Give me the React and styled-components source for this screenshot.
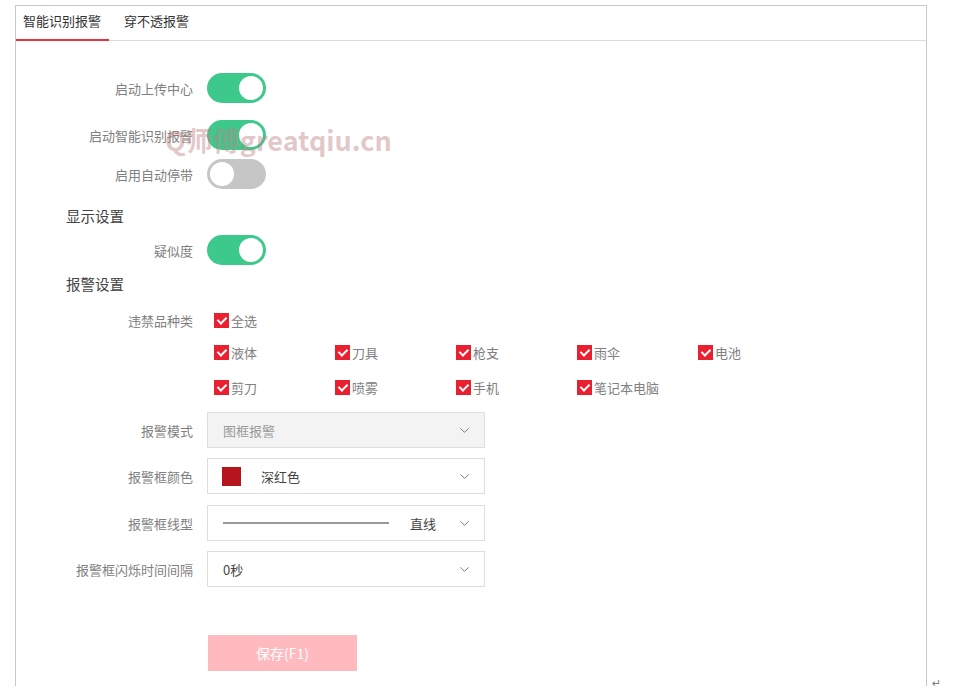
import React, {useState} from "react";
import styled, {createGlobalStyle} from "styled-components";
import {ChevronDown} from "lucide-react";

const GlobalStyle = createGlobalStyle`
  body {
    margin: 0;
    background: #fff;
    font-family: "Noto Sans CJK SC", "Noto Sans", sans-serif;
  }
`;

const items = [
  ["液体", "刀具", "枪支", "雨伞", "电池"],
  ["剪刀", "喷雾", "手机", "笔记本电脑"],
];

const App = () => {
  const [toggles, setToggles] = useState({
    upload: true,
    smart: true,
    autoStop: false,
    similarity: true,
  });

  const flip = (key) => setToggles({...toggles, [key]: !toggles[key]});

  return (
    <>
      <GlobalStyle />
      <Page>
        <Frame>
          <TabBar>
            <Tab active>智能识别报警</Tab>
            <Tab>穿不透报警</Tab>
          </TabBar>
          <Content>
            <Row mt={32} h={30}>
              <Label>启动上传中心</Label>
              <Switch on={toggles.upload} onClick={() => flip("upload")} />
            </Row>
            <Row mt={17} h={30}>
              <Label>启动智能识别报警</Label>
              <Switch on={toggles.smart} onClick={() => flip("smart")} />
            </Row>
            <Row mt={9} h={30}>
              <Label>启用自动停带</Label>
              <Switch on={toggles.autoStop} onClick={() => flip("autoStop")} />
            </Row>
            <Heading mt={17}>显示设置</Heading>
            <Row mt={9} h={30}>
              <Label>疑似度</Label>
              <Switch
                on={toggles.similarity}
                onClick={() => flip("similarity")}
              />
            </Row>
            <Heading mt={9}>报警设置</Heading>
            <Row mt={16} h={20}>
              <Label>违禁品种类</Label>
              <CheckGroup>
                <Check>
                  <Box />
                  全选
                </Check>
              </CheckGroup>
            </Row>
            {items.map((row, i) => (
              <Row mt={i === 0 ? 12 : 15} h={20} key={i}>
                <span />
                <CheckGroup>
                  {row.map((name) => (
                    <Check key={name}>
                      <Box />
                      {name}
                    </Check>
                  ))}
                </CheckGroup>
              </Row>
            ))}
            <Row mt={15} h={36}>
              <Label>报警模式</Label>
              <Select disabled>
                <SelectText disabled>图框报警</SelectText>
                <ChevronDown size={15} strokeWidth={1.6} color="#7a7a7a" />
              </Select>
            </Row>
            <Row mt={10} h={36}>
              <Label>报警框颜色</Label>
              <Select>
                <Swatch />
                <SelectText>深红色</SelectText>
                <ChevronDown size={15} strokeWidth={1.6} color="#7a7a7a" />
              </Select>
            </Row>
            <Row mt={11} h={36}>
              <Label>报警框线型</Label>
              <Select>
                <LineSample />
                <LineText>直线</LineText>
                <ChevronDown size={15} strokeWidth={1.6} color="#7a7a7a" />
              </Select>
            </Row>
            <Row mt={10} h={36}>
              <Label>报警框闪烁时间间隔</Label>
              <Select>
                <SelectText>0秒</SelectText>
                <ChevronDown size={15} strokeWidth={1.6} color="#7a7a7a" />
              </Select>
            </Row>
            <Row mt={48} h={36}>
              <span />
              <SaveButton>保存(F1)</SaveButton>
            </Row>
          </Content>
          <Watermark>Q师傅greatqiu.cn</Watermark>
        </Frame>
        <ReturnMark>↵</ReturnMark>
      </Page>
    </>
  );
};

const Page = styled.div`
  display: flex;
  align-items: flex-end;
  padding: 5px 0 0 15px;
  height: 686px;
  box-sizing: border-box;
`;

const Frame = styled.div`
  position: relative;
  width: 912px;
  height: 681px;
  box-sizing: border-box;
  border: 1px solid #c8c8c8;
  border-bottom: none;
  overflow: hidden;
`;

const ReturnMark = styled.span`
  margin-left: 5px;
  margin-bottom: -4px;
  font-size: 11px;
  color: #777;
  font-family: "DejaVu Sans", sans-serif;
`;

const TabBar = styled.div`
  display: flex;
  height: 34px;
  border-bottom: 1px solid #dcdcdc;
`;

const Tab = styled.div`
  display: flex;
  align-items: center;
  padding: 0 8px 4px 7px;
  margin-right: 8px;
  font-size: 13px;
  color: #333;
  border-bottom: 2px solid ${(p) => (p.active ? "#e8333a" : "transparent")};
  margin-bottom: -1px;
  cursor: pointer;
`;

const Content = styled.div`
  display: flex;
  flex-direction: column;
`;

const Row = styled.div`
  display: grid;
  grid-template-columns: 177px auto;
  column-gap: 14px;
  align-items: center;
  height: ${(p) => p.h}px;
  margin-top: ${(p) => p.mt}px;
`;

const Label = styled.div`
  text-align: right;
  font-size: 13px;
  color: #808080;
  white-space: nowrap;
`;

const Heading = styled.div`
  height: 20px;
  line-height: 20px;
  margin-top: ${(p) => p.mt}px;
  padding-left: 50px;
  font-size: 14.5px;
  color: #444;
`;

const Switch = styled.div`
  position: relative;
  width: 59px;
  height: 30px;
  border-radius: 15px;
  background: ${(p) => (p.on ? "#3dc98b" : "#c6c6c6")};
  cursor: pointer;

  &::after {
    content: "";
    position: absolute;
    top: 3px;
    left: ${(p) => (p.on ? "32px" : "3px")};
    width: 24px;
    height: 24px;
    border-radius: 50%;
    background: #fff;
  }
`;

const CheckGroup = styled.div`
  display: grid;
  grid-template-columns: repeat(5, 121px);
  padding-left: 7px;
`;

const Check = styled.label`
  display: flex;
  align-items: center;
  gap: 2px;
  font-size: 13px;
  color: #808080;
  white-space: nowrap;
`;

const Box = styled.span`
  position: relative;
  width: 15px;
  height: 15px;
  background: #e8202f;
  flex-shrink: 0;

  &::after {
    content: "";
    position: absolute;
    left: 5px;
    top: 2.5px;
    width: 4px;
    height: 7px;
    border: solid #fff;
    border-width: 0 2px 2px 0;
    transform: rotate(45deg);
  }
`;

const Select = styled.div`
  display: flex;
  align-items: center;
  width: 278px;
  height: 36px;
  box-sizing: border-box;
  padding: 0 12px 0 15px;
  border: 1px solid #dedede;
  background: ${(p) => (p.disabled ? "#f3f3f3" : "#fff")};
`;

const SelectText = styled.span`
  flex: 1;
  font-size: 13px;
  color: ${(p) => (p.disabled ? "#9a9a9a" : "#444")};
`;

const Swatch = styled.span`
  width: 19px;
  height: 19px;
  margin-left: -1px;
  margin-right: 20px;
  background: #b5161e;
`;

const LineSample = styled.span`
  width: 166px;
  height: 2px;
  background: #999;
  margin-right: 21px;
`;

const LineText = styled.span`
  flex: 1;
  font-size: 13px;
  color: #444;
`;

const SaveButton = styled.button`
  width: 149px;
  height: 36px;
  margin-left: 1px;
  border: none;
  background: #ffbac0;
  color: #fff;
  font-size: 14px;
  font-family: "Noto Sans CJK SC", "Noto Sans", sans-serif;
`;

const Watermark = styled.div`
  position: absolute;
  left: 149px;
  top: 114px;
  font-size: 27px;
  font-weight: bold;
  color: rgba(190, 130, 130, 0.45);
  pointer-events: none;
  white-space: nowrap;
  font-family: "Noto Sans CJK SC", "Noto Sans", sans-serif;
`;

export default App;
